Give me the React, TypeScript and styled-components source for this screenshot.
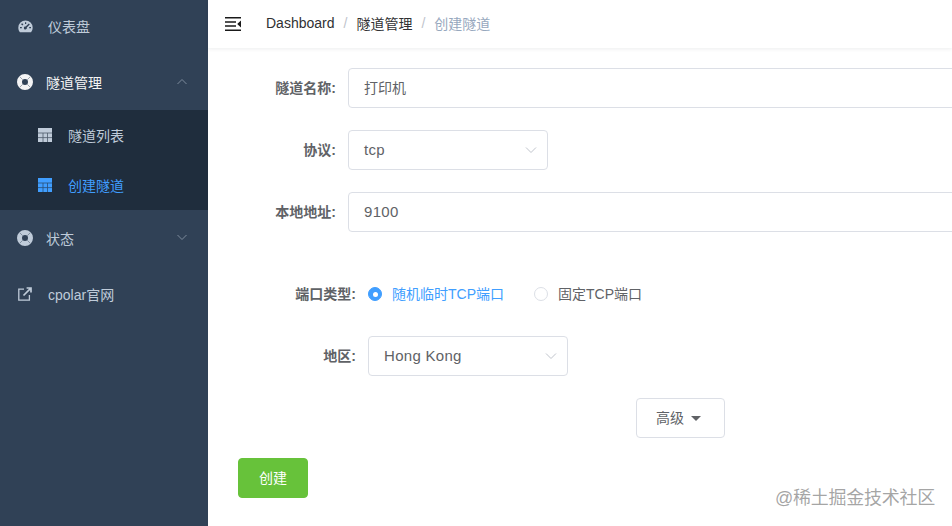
import React from "react";
import styled, { createGlobalStyle } from "styled-components";

const Global = createGlobalStyle`
  html, body { margin: 0; padding: 0; height: 100%; background: #fff; overflow: hidden; }
  body { font-family: "Liberation Sans", "Noto Sans CJK SC", sans-serif; font-size: 14px; }
  #root { height: 100%; }
  * { box-sizing: border-box; }
`;

const Shell = styled.div`
  display: flex;
  width: 952px;
  height: 526px;
  overflow: hidden;
  position: relative;
`;
const Sidebar = styled.aside`
  width: 208px;
  flex: none;
  background: #304156;
  display: flex;
  flex-direction: column;
`;
const MenuItem = styled.div<{ $h?: number; $active?: boolean; $indent?: number; $lift?: number }>`
  height: ${(p) => p.$h ?? 56}px;
  flex: none;
  display: flex;
  align-items: center;
  padding-left: ${(p) => p.$indent ?? 18}px;
  padding-bottom: ${(p) => p.$lift ?? 0}px;
  color: ${(p) => (p.$active ? "#f4f4f5" : "#bfcbd9")};
  position: relative;
`;
const IconSlot = styled.span<{ $w: number }>`
  width: ${(p) => p.$w}px;
  flex: none;
  display: flex;
  align-items: center;
`;
const Chevron = styled.svg`
  position: absolute;
  left: 176px;
  top: 50%;
  margin-top: -5px;
  width: 12px;
  height: 8px;
`;
const SubMenu = styled.div`
  background: #1f2d3d;
  display: flex;
  flex-direction: column;
`;
const SubItem = styled.div<{ $active?: boolean }>`
  height: 50px;
  display: flex;
  align-items: center;
  padding-left: 38px;
  color: ${(p) => (p.$active ? "#409eff" : "#bfcbd9")};
`;
const Main = styled.main`
  flex: 1;
  min-width: 0;
  display: flex;
  flex-direction: column;
`;
const Navbar = styled.header`
  height: 48px;
  flex: none;
  display: flex;
  align-items: center;
  padding-left: 17px;
  box-shadow: 0 1px 4px rgba(0, 21, 41, 0.08);
`;
const Crumbs = styled.nav`
  margin-left: 25px;
  padding-bottom: 2px;
  display: flex;
  align-items: center;
  color: #303133;
`;
const Crumb = styled.span<{ $muted?: boolean }>`
  color: ${(p) => (p.$muted ? "#97a8be" : "#303133")};
`;
const Sep = styled.span`
  color: #c0c4cc;
  margin: 0 9px;
`;
const Form = styled.div`
  padding-top: 20px;
  display: flex;
  flex-direction: column;
`;
const Row = styled.div<{ $mb?: number; $h?: number }>`
  display: flex;
  align-items: center;
  height: ${(p) => p.$h ?? 40}px;
  margin-bottom: ${(p) => p.$mb ?? 22}px;
`;
const Label = styled.label<{ $w: number }>`
  width: ${(p) => p.$w}px;
  flex: none;
  padding-right: 12px;
  padding-bottom: 2px;
  text-align: right;
  font-weight: 700;
  color: #606266;
`;
const Input = styled.div`
  flex: 1;
  height: 40px;
  margin-right: -20px;
  border: 1px solid #dcdfe6;
  border-radius: 4px;
  padding: 0 15px;
  display: flex;
  align-items: center;
  color: #606266;
`;
const Select = styled.div`
  width: 200px;
  height: 40px;
  border: 1px solid #dcdfe6;
  border-radius: 4px;
  padding: 0 15px;
  display: flex;
  align-items: center;
  justify-content: space-between;
  color: #606266;
`;
const InputText = styled.span`
  font-size: 15px;
  letter-spacing: 0.3px;
  padding-bottom: 2px;
`;
const InputCjk = styled.span`
  padding-bottom: 2px;
`;
const SelectArrow = styled.svg`
  width: 12px;
  height: 8px;
  margin-right: -5px;
`;
const Radio = styled.span<{ $on?: boolean }>`
  width: 14px;
  height: 14px;
  border-radius: 50%;
  flex: none;
  border: 1px solid ${(p) => (p.$on ? "#409eff" : "#dcdfe6")};
  background: ${(p) => (p.$on ? "#409eff" : "#fff")};
  display: flex;
  align-items: center;
  justify-content: center;
  &::after {
    content: "";
    width: 5px;
    height: 5px;
    border-radius: 50%;
    background: #fff;
  }
`;
const RadioLabel = styled.span<{ $on?: boolean }>`
  margin-left: 10px;
  margin-right: 30px;
  padding-bottom: 2px;
  color: ${(p) => (p.$on ? "#409eff" : "#606266")};
`;
const AdvancedRow = styled.div`
  display: flex;
  justify-content: flex-start;
  padding-left: 428px;
  margin-bottom: 20px;
`;
const AdvancedButton = styled.button`
  width: 89px;
  height: 40px;
  background: #fff;
  border: 1px solid #dcdfe6;
  border-radius: 4px;
  color: #606266;
  font: inherit;
  display: flex;
  align-items: center;
  gap: 7px;
  padding: 0 0 2px 19px;
`;
const Caret = styled.span`
  width: 0;
  height: 0;
  margin-top: 2px;
  border-left: 5px solid transparent;
  border-right: 5px solid transparent;
  border-top: 5px solid #606266;
`;
const CreateRow = styled.div`
  padding-left: 30px;
`;
const CreateButton = styled.button`
  width: 70px;
  height: 40px;
  background: #67c23a;
  border: 1px solid #67c23a;
  border-radius: 4px;
  color: #fff;
  font: inherit;
  padding: 0 0 2px;
`;
const Watermark = styled.div`
  position: absolute;
  left: 775px;
  top: 486px;
  font-size: 18px;
  line-height: 24px;
  letter-spacing: -0.25px;
  color: rgba(130, 130, 130, 0.72);
  white-space: nowrap;
`;

const Ring = ({ c = "#bfcbd9", bg }: { c?: string; bg: string }) => (
  <svg width="16" height="16" viewBox="0 0 16 16">
    <circle cx="8" cy="8" r="5.5" fill="none" stroke={c} strokeWidth="5" />
    <path d="M2.6 2.6 5.7 5.7M13.4 2.6 10.3 5.7M2.6 13.4 5.7 10.3M13.4 13.4 10.3 10.3" stroke={bg} strokeWidth="0.8" opacity="0.55" />
  </svg>
);
const Gauge = () => (
  <svg width="15" height="13" viewBox="0 0 15 13">
    <path
      fillRule="evenodd"
      fill="#bfcbd9"
      d="M7.5 0.5A7.2 7.2 0 0 0 0.3 7.7c0 1.7.6 3.3 1.6 4.5h11.2a7.2 7.2 0 0 0 1.6-4.5A7.2 7.2 0 0 0 7.5.5zM4 3.2l1.4 1-1 1.2-1.3-1.1zM7 2.3h1.2v1.7H7zM10.8 3.4l1 1-3 3.2a1.5 1.5 0 1 1-1.1-1zM2 7h1.8v1.2H2zM11.2 7H13v1.2h-1.8z"
    />
  </svg>
);
const External = () => (
  <svg width="14" height="14" viewBox="0 0 14 14" fill="none" stroke="#bfcbd9">
    <path d="M6 2.2H.8v11h10.6V8" strokeWidth="1.3" />
    <path d="M5.5 8.5 12.6 1.4M8.6 1h4.4v4.4" strokeWidth="1.7" />
  </svg>
);
const Grid = ({ c, line }: { c: string; line: string }) => (
  <svg width="14" height="14" viewBox="0 0 14 14">
    <path fill={c} d="M0 0h14v14H0z" />
    <path stroke={line} strokeWidth="0.8" opacity="0.7" d="M0 5h14M0 9.6h14M5 5v9M9.5 5v9" />
  </svg>
);
const Hamburger = () => (
  <svg width="16" height="14" viewBox="0 0 16 14">
    <path fill="#1a1a1a" d="M0 0h16v1.5H0zM0 12.5h16V14H0zM0 4.3h11v1.5H0zM0 8.3h11v1.5H0zM16 3.6v6.8L12.2 7z" />
  </svg>
);
const Up = () => (
  <Chevron viewBox="0 0 12 8" fill="none" stroke="#7d8b9c" strokeWidth="1">
    <path d="M1.5 6 6 1.5 10.5 6" />
  </Chevron>
);
const Down = () => (
  <Chevron viewBox="0 0 12 8" fill="none" stroke="#7d8b9c" strokeWidth="1">
    <path d="M1.5 2 6 6.5 10.5 2" />
  </Chevron>
);
const SelArrow = () => (
  <SelectArrow viewBox="0 0 12 8" fill="none" stroke="#c0c4cc" strokeWidth="1">
    <path d="M1 1.5 6 6.5 11 1.5" />
  </SelectArrow>
);

export default function App() {
  return (
    <Shell>
      <Global />
      <Sidebar>
        <MenuItem $h={55} $lift={3}>
          <IconSlot $w={30}><Gauge /></IconSlot>仪表盘
        </MenuItem>
        <MenuItem $h={55} $lift={2} $active $indent={17}>
          <IconSlot $w={29}><Ring c="#f4f4f5" bg="#304156" /></IconSlot>隧道管理<Up />
        </MenuItem>
        <SubMenu>
          <SubItem>
            <IconSlot $w={30}><Grid c="#bfcbd9" line="#1f2d3d" /></IconSlot>隧道列表
          </SubItem>
          <SubItem $active>
            <IconSlot $w={30}><Grid c="#409eff" line="#1f2d3d" /></IconSlot>创建隧道
          </SubItem>
        </SubMenu>
        <MenuItem $indent={17}>
          <IconSlot $w={29}><Ring bg="#304156" /></IconSlot>状态<Down />
        </MenuItem>
        <MenuItem>
          <IconSlot $w={30}><External /></IconSlot>cpolar官网
        </MenuItem>
      </Sidebar>
      <Main>
        <Navbar>
          <Hamburger />
          <Crumbs>
            <Crumb>Dashboard</Crumb>
            <Sep>/</Sep>
            <Crumb>隧道管理</Crumb>
            <Sep>/</Sep>
            <Crumb $muted>创建隧道</Crumb>
          </Crumbs>
        </Navbar>
        <Form>
          <Row>
            <Label $w={140}>隧道名称:</Label>
            <Input><InputCjk>打印机</InputCjk></Input>
          </Row>
          <Row>
            <Label $w={140}>协议:</Label>
            <Select><InputText>tcp</InputText><SelArrow /></Select>
          </Row>
          <Row $mb={42}>
            <Label $w={140}>本地地址:</Label>
            <Input><InputText>9100</InputText></Input>
          </Row>
          <Row>
            <Label $w={160}>端口类型:</Label>
            <Radio $on />
            <RadioLabel $on>随机临时TCP端口</RadioLabel>
            <Radio />
            <RadioLabel>固定TCP端口</RadioLabel>
          </Row>
          <Row>
            <Label $w={160}>地区:</Label>
            <Select><InputText>Hong Kong</InputText><SelArrow /></Select>
          </Row>
          <AdvancedRow>
            <AdvancedButton>高级<Caret /></AdvancedButton>
          </AdvancedRow>
          <CreateRow>
            <CreateButton>创建</CreateButton>
          </CreateRow>
        </Form>
      </Main>
      <Watermark>@稀土掘金技术社区</Watermark>
    </Shell>
  );
}
